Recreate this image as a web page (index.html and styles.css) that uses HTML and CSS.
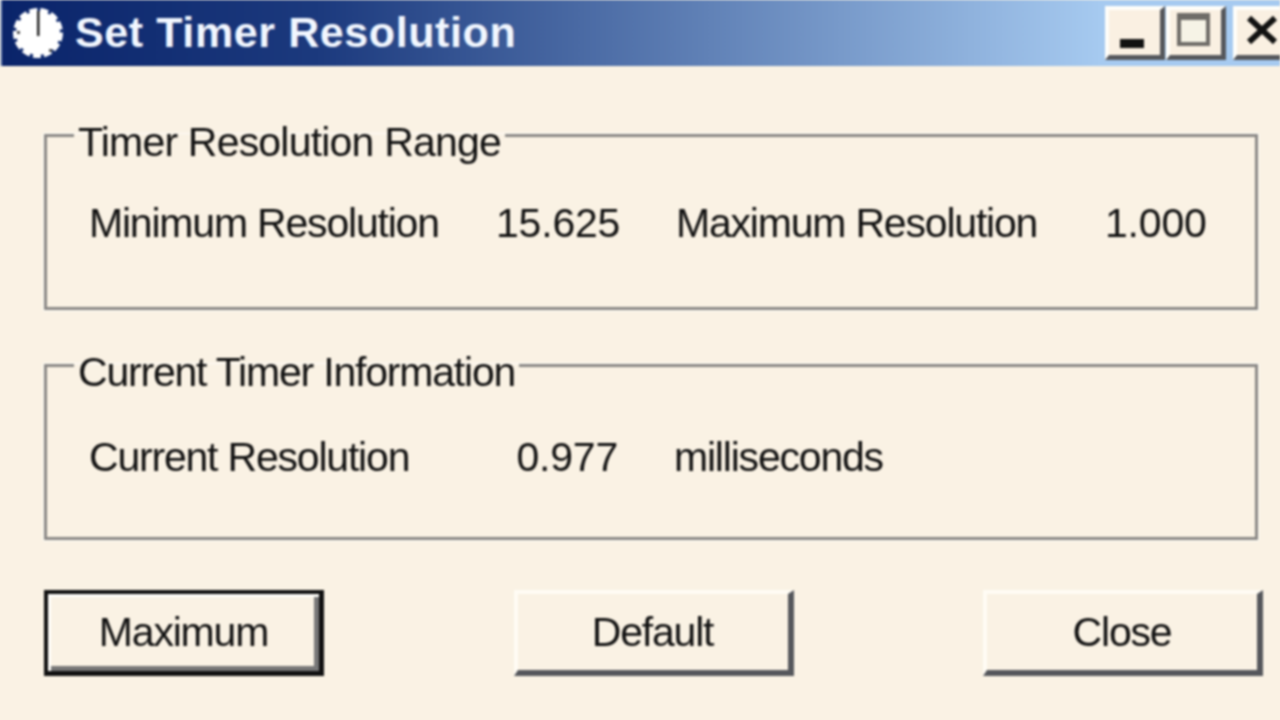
FILE: index.html
```html
<!DOCTYPE html>
<html lang="en">
  <head>
    <meta charset="UTF-8" />
    <title>Set Timer Resolution</title>
    <link rel="stylesheet" href="styles.css">
  </head>
  <body>
    <div class="window">
      <div class="titlebar">
        <svg class="clock" viewBox="0 0 52 52" width="52" height="52">
          <circle cx="26" cy="26" r="22" fill="#fff" />
          <circle cx="26" cy="26" r="23" fill="none" stroke="#fff" stroke-width="4" stroke-dasharray="8 3" />
          <rect x="25" y="4" width="2.5" height="25" fill="#222" />
          <rect x="5" y="24" width="3" height="3" fill="#555" />
          <rect x="37" y="42" width="3" height="3" fill="#555" />
        </svg>
        <span class="title">Set Timer Resolution</span>
        <div class="controls">
          <button class="ctl">
            <svg viewBox="4 4 51 45" width="51" height="45"><rect x="15" y="33" width="24" height="9" fill="#111" /></svg>
          </button>
          <button class="ctl">
            <svg viewBox="4 4 51 45" width="51" height="45"><rect x="11" y="7" width="33" height="33" fill="#6f6c68" /><rect x="15" y="14" width="25" height="22" fill="#f6f3e6" /></svg>
          </button>
          <button class="ctl ctl-close">
            <svg viewBox="4 4 51 45" width="51" height="45"><path d="M16 12 L42 36 M42 12 L16 36" stroke="#111" stroke-width="6" fill="none" /></svg>
          </button>
        </div>
      </div>

      <div class="content">
        <fieldset class="group">
          <legend class="legend-wide">Timer Resolution Range</legend>
          <div class="row row-range">
            <span>Minimum Resolution</span>
            <span class="num">15.625</span>
            <span>Maximum Resolution</span>
            <span class="num">1.000</span>
          </div>
        </fieldset>

        <fieldset class="group">
          <legend>Current Timer Information</legend>
          <div class="row row-current">
            <span>Current Resolution</span>
            <span class="num">0.977</span>
            <span>milliseconds</span>
          </div>
        </fieldset>

        <div class="buttons">
          <button class="btn btn-default">Maximum</button>
          <button class="btn">Default</button>
          <button class="btn">Close</button>
        </div>
      </div>
    </div>
  </body>
</html>
```

FILE: styles.css
```css
html,
body {
  margin: 0;
  height: 100%;
  overflow: hidden;
}

body {
  background: #faf2e4;
  color: #111;
  font-family: "Liberation Sans", Arial, sans-serif;
  font-size: 41px;
  letter-spacing: -1.2px;
}

.window {
  width: 1280px;
  height: 720px;
  overflow: hidden;
  filter: blur(0.8px);
}

/* title bar */
.titlebar {
  display: flex;
  align-items: center;
  height: 66px;
  padding-left: 10px;
  background: linear-gradient(90deg, #0a246a 0%, #1c3a7e 25%, #a6caf0 86%);
  border-left: 2px solid #8fa0c0;
  box-sizing: border-box;
}

.clock {
  flex: none;
}

.title {
  margin-left: 11px;
  margin-top: -2px;
  color: #f2f7ff;
  font-weight: bold;
  font-size: 43px;
  letter-spacing: 0.6px;
}

.controls {
  display: flex;
  gap: 1px;
  margin-left: auto;
  margin-right: -13px;
}

.ctl {
  width: 60px;
  height: 54px;
  margin: 0;
  padding: 0;
  box-sizing: border-box;
  background: #faf0e2;
  border-style: solid;
  border-width: 4px 5px 5px 4px;
  border-color: #fffefa #55575c #55575c #fffefa;
}

.ctl-close {
  margin-left: 6px;
}

.ctl svg {
  display: block;
}

/* group boxes */
.content {
  display: flex;
  flex-direction: column;
  padding: 40px 22px 0 44px;
  gap: 26px;
}

.group {
  height: 204px;
  margin: 0;
  padding: 0 0 0 42px;
  box-sizing: border-box;
  border: 3px solid #8a8885;
  box-shadow: 0 0 0 1px #fffdf8;
}

.group legend {
  margin-left: -15px;
  padding: 14px 4px 0;
  line-height: 44px;
}

.group .legend-wide {
  letter-spacing: -0.8px;
}

.row {
  display: grid;
  align-items: center;
  line-height: 44px;
}

.row-range {
  grid-template-columns: 407px 124px 485px 100px;
  margin-top: 37px;
}

.row-current {
  grid-template-columns: 407px 122px 300px;
  margin-top: 41px;
}

.row span:nth-child(3) {
  margin-left: 56px;
}

.num {
  text-align: right;
  letter-spacing: -0.2px;
}

/* buttons */
.buttons {
  display: flex;
  justify-content: space-between;
  margin-top: 24px;
  margin-right: -5px;
}

.btn {
  width: 280px;
  height: 86px;
  padding: 0;
  box-sizing: border-box;
  background: #faf2e4;
  color: #111;
  font: inherit;
  letter-spacing: inherit;
  border-style: solid;
  border-width: 4px 6px 6px 4px;
  border-color: #fffcf4 #55575c #55575c #fffcf4;
}

.btn-default {
  border-width: 4px 5px 5px 4px;
  border-color: #111;
  box-shadow: inset 3px 3px 0 #fffefa, inset -5px -5px 0 #777;
}
```
